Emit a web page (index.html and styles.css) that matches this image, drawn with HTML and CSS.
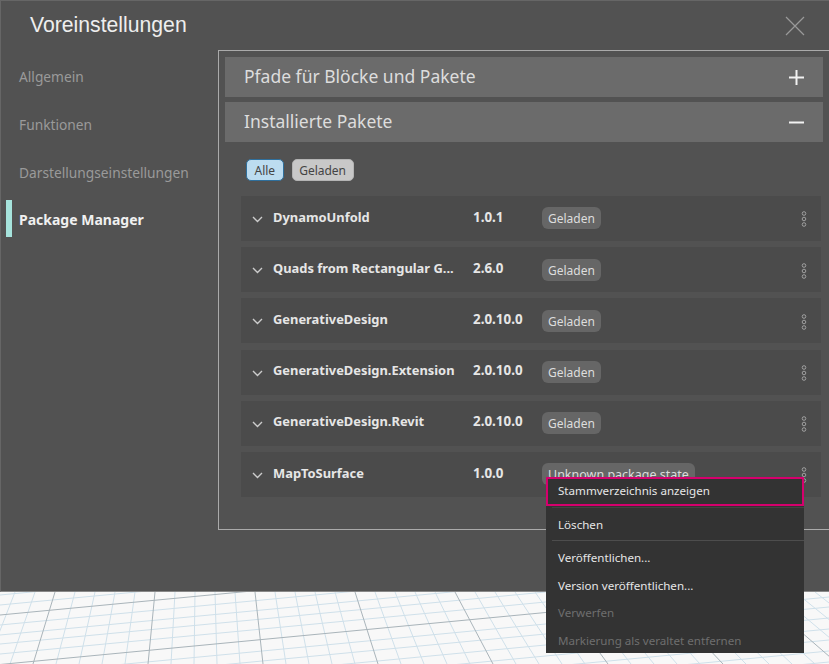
FILE: index.html
```html
<!DOCTYPE html>
<html lang="de">
  <head>
    <meta charset="UTF-8" />
    <title>Voreinstellungen</title>
    <link rel="stylesheet" href="styles.css">
  </head>
  <body>
    <div class="dialog">
      <div class="header">
        <h1>Voreinstellungen</h1>
        <svg class="close" width="20" height="20" viewBox="0 0 20 20"><path d="M1 1L19 19M19 1L1 19" /></svg>
      </div>
      <div class="main">
        <ul class="nav">
          <li>Allgemein</li>
          <li>Funktionen</li>
          <li>Darstellungseinstellungen</li>
          <li class="active">Package Manager</li>
        </ul>
        <div class="panel">
          <div class="bar"><span>Pfade für Blöcke und Pakete</span><svg width="15" height="15" viewBox="0 0 15 15"><path d="M0 7.5H15M7.5 0V15" /></svg></div>
          <div class="bar"><span>Installierte Pakete</span><svg width="15" height="15" viewBox="0 0 15 15"><path d="M0 7.5H15" /></svg></div>
          <div class="chips">
            <span class="chip chip-on">Alle</span>
            <span class="chip">Geladen</span>
          </div>
          <div class="pkg">
            <svg class="chev" width="11" height="7" viewBox="0 0 11 7"><path d="M1 1L5.5 5.5L10 1" /></svg>
            <span class="name">DynamoUnfold</span><span class="ver">1.0.1</span>
            <span class="state">Geladen</span>
            <svg class="dots" width="6" height="16" viewBox="0 0 6 16"><circle cx="3" cy="2.5" r="1.8" /><circle cx="3" cy="8" r="1.8" /><circle cx="3" cy="13.5" r="1.8" /></svg>
          </div>
          <div class="pkg">
            <svg class="chev" width="11" height="7" viewBox="0 0 11 7"><path d="M1 1L5.5 5.5L10 1" /></svg>
            <span class="name">Quads from Rectangular G...</span><span class="ver">2.6.0</span>
            <span class="state">Geladen</span>
            <svg class="dots" width="6" height="16" viewBox="0 0 6 16"><circle cx="3" cy="2.5" r="1.8" /><circle cx="3" cy="8" r="1.8" /><circle cx="3" cy="13.5" r="1.8" /></svg>
          </div>
          <div class="pkg">
            <svg class="chev" width="11" height="7" viewBox="0 0 11 7"><path d="M1 1L5.5 5.5L10 1" /></svg>
            <span class="name">GenerativeDesign</span><span class="ver">2.0.10.0</span>
            <span class="state">Geladen</span>
            <svg class="dots" width="6" height="16" viewBox="0 0 6 16"><circle cx="3" cy="2.5" r="1.8" /><circle cx="3" cy="8" r="1.8" /><circle cx="3" cy="13.5" r="1.8" /></svg>
          </div>
          <div class="pkg">
            <svg class="chev" width="11" height="7" viewBox="0 0 11 7"><path d="M1 1L5.5 5.5L10 1" /></svg>
            <span class="name">GenerativeDesign.Extension</span><span class="ver">2.0.10.0</span>
            <span class="state">Geladen</span>
            <svg class="dots" width="6" height="16" viewBox="0 0 6 16"><circle cx="3" cy="2.5" r="1.8" /><circle cx="3" cy="8" r="1.8" /><circle cx="3" cy="13.5" r="1.8" /></svg>
          </div>
          <div class="pkg">
            <svg class="chev" width="11" height="7" viewBox="0 0 11 7"><path d="M1 1L5.5 5.5L10 1" /></svg>
            <span class="name">GenerativeDesign.Revit</span><span class="ver">2.0.10.0</span>
            <span class="state">Geladen</span>
            <svg class="dots" width="6" height="16" viewBox="0 0 6 16"><circle cx="3" cy="2.5" r="1.8" /><circle cx="3" cy="8" r="1.8" /><circle cx="3" cy="13.5" r="1.8" /></svg>
          </div>
          <div class="pkg">
            <svg class="chev" width="11" height="7" viewBox="0 0 11 7"><path d="M1 1L5.5 5.5L10 1" /></svg>
            <span class="name">MapToSurface</span><span class="ver">1.0.0</span>
            <span class="state state-long">Unknown package state</span>
            <svg class="dots" width="6" height="16" viewBox="0 0 6 16"><circle cx="3" cy="2.5" r="1.8" /><circle cx="3" cy="8" r="1.8" /><circle cx="3" cy="13.5" r="1.8" /></svg>
          </div>
        </div>
      </div>
    </div>

    <svg class="floor" width="829" height="72" viewBox="0 0 829 72">
      <path class="minor" d="M-25 0L-59 72M-5 0L-36 72M15 0L-13 72M35 0L10 72M75 0L56 72M95 0L79 72M115 0L102 72M135 0L125 72M175 0L171 72M195 0L194 72M215 0L217 72M235 0L240 72M275 0L286 72M295 0L309 72M315 0L332 72M335 0L355 72M375 0L401 72M395 0L424 72M415 0L447 72M435 0L470 72M475 0L516 72M495 0L539 72M515 0L562 72M535 0L585 72M575 0L631 72M595 0L654 72M615 0L677 72M635 0L700 72M675 0L746 72M695 0L769 72M715 0L792 72M735 0L815 72M775 0L861 72M795 0L884 72M815 0L907 72" />
      <path class="minor" d="M0 3L829 -76M0 13L829 -66M0 33L829 -46M0 43L829 -36M0 52L829 -27M0 62L829 -17M0 84L829 5M0 94L829 15M0 105L829 26M0 116L829 37M0 127L829 48M0 138L829 59M0 149L829 70" />
      <path class="major" d="M55 0L33 72M155 0L148 72M255 0L263 72M355 0L378 72M455 0L493 72M555 0L608 72M655 0L723 72M755 0L838 72M0 23L829 -56M0 72.5L829 -6.5" />
    </svg>

    <div class="menu">
      <div class="item item-hl">Stammverzeichnis anzeigen</div>
      <div class="item">Löschen</div>
      <div class="sep"></div>
      <div class="item">Veröffentlichen...</div>
      <div class="item item-tight">Version veröffentlichen...</div>
      <div class="item item-off">Verwerfen</div>
      <div class="item item-off">Markierung als veraltet entfernen</div>
    </div>
  </body>
</html>
```

FILE: styles.css
```css
html, body {
  margin: 0;
  padding: 0;
}
body {
  position: relative;
  width: 829px;
  height: 664px;
  overflow: hidden;
  background: #f8f8f8;
  font-family: "Noto Sans", sans-serif;
  color: #ddd;
}
.dialog {
  height: 592px;
  background: #525252;
  border-top: 1px solid #666;
  border-left: 1px solid #666;
  border-bottom: 1px solid #888;
  box-sizing: border-box;
  display: flex;
  flex-direction: column;
}
.header {
  height: 49px;
  flex: none;
  display: flex;
  align-items: center;
  justify-content: space-between;
  padding: 0 24px 0 29px;
  box-sizing: border-box;
}
.header h1 {
  margin: 0 0 2px;
  font: 400 21.2px "Liberation Sans", sans-serif;
  color: #eee;
}
.close path {
  stroke: #999;
  stroke-width: 1.2;
  fill: none;
}
.main {
  display: flex;
  align-items: flex-start;
}
.nav {
  list-style: none;
  width: 217px;
  flex: none;
  margin: 0;
  padding: 2.6px 0 0 5px;
  box-sizing: border-box;
}
.nav li {
  height: 48px;
  line-height: 48px;
  padding-left: 13px;
  font-size: 13.75px;
  color: #9a9a9a;
  box-sizing: border-box;
}
.nav li.active {
  color: #f0f0f0;
  font-weight: 700;
  font-size: 14px;
  border-left: 6px solid #a6e3dc;
  padding-left: 7px;
  height: 37px;
  line-height: 39px;
  margin-top: 3.5px;
}
.panel {
  flex: 1;
  height: 480px;
  box-sizing: border-box;
  border: 1px solid #aaa;
  border-right: none;
  padding: 6px 6px 0;
}
.bar {
  height: 40px;
  margin-bottom: 5px;
  background: #6b6b6b;
  display: flex;
  align-items: center;
  justify-content: space-between;
  padding: 0 19px 0 19px;
  font-size: 17.5px;
  color: #ddd;
}
.bar span {
  margin-bottom: 2px;
}
.bar svg path {
  stroke: #f2f2f2;
  stroke-width: 2;
  fill: none;
}
.chips {
  display: flex;
  gap: 8px;
  margin: 17px 0 15px 21px;
}
.chip {
  height: 22px;
  line-height: 21px;
  padding: 0 6.5px;
  border-radius: 5px;
  box-sizing: border-box;
  border: 1px solid #b4b4b4;
  background: #c8c8c8;
  color: #444;
  font-size: 12px;
}
.chip-on {
  padding: 0 7.5px;
  background: #bcdcf0;
  border-color: #2f6f9c;
}
.pkg {
  height: 45px;
  margin: 0 2px 6.2px 16px;
  background: #4b4b4b;
  display: flex;
  align-items: flex-start;
  padding: 11.65px 14px 0 11px;
  box-sizing: border-box;
  font-size: 12.9px;
  font-weight: 700;
  color: #e6e6e6;
}
.chev {
  margin: 8.35px 10px 0 0;
  flex: none;
}
.chev path {
  stroke: #ccc;
  stroke-width: 1.4;
  fill: none;
}
.name {
  width: 200px;
  white-space: nowrap;
}
.ver {
  width: 69px;
  font-size: 13.4px;
}
.state {
  height: 22px;
  line-height: 23px;
  margin-top: -0.25px;
  padding: 0 6px;
  border-radius: 6px;
  background: #666;
  font-size: 12px;
  font-weight: 400;
  color: #ddd;
}
.state-long {
  font-size: 12.5px;
}
.dots {
  margin: 3.75px 0 0 auto;
}
.dots circle {
  fill: none;
  stroke: #a0a0a0;
  stroke-width: 1;
}
.floor {
  display: block;
}
.floor path {
  fill: none;
  stroke-width: 1;
}
.minor {
  stroke: #cfe0ea;
}
.major {
  stroke: #a9b4ba;
}
.menu {
  position: absolute;
  left: 546px;
  top: 477px;
  width: 258px;
  height: 176px;
  background: #333;
  box-sizing: border-box;
  font-size: 11.6px;
  color: #e6e6e6;
}
.item {
  height: 28px;
  line-height: 28px;
  padding-left: 12px;
}
.item-hl {
  height: 29px;
  margin-bottom: 5px;
  padding-left: 10px;
  border: 2px solid #d5006d;
  line-height: 23px;
  box-sizing: border-box;
  position: relative;
}
.item-hl::after {
  content: "";
  position: absolute;
  left: 4px;
  right: -2px;
  bottom: -4px;
  height: 1px;
  background: #424242;
}
.sep {
  height: 1px;
  background: #4d4d4d;
  margin: 1px 0 3px 6px;
}
.item-tight {
  height: 27px;
}
.item-off {
  color: #6e6e6e;
}
```
